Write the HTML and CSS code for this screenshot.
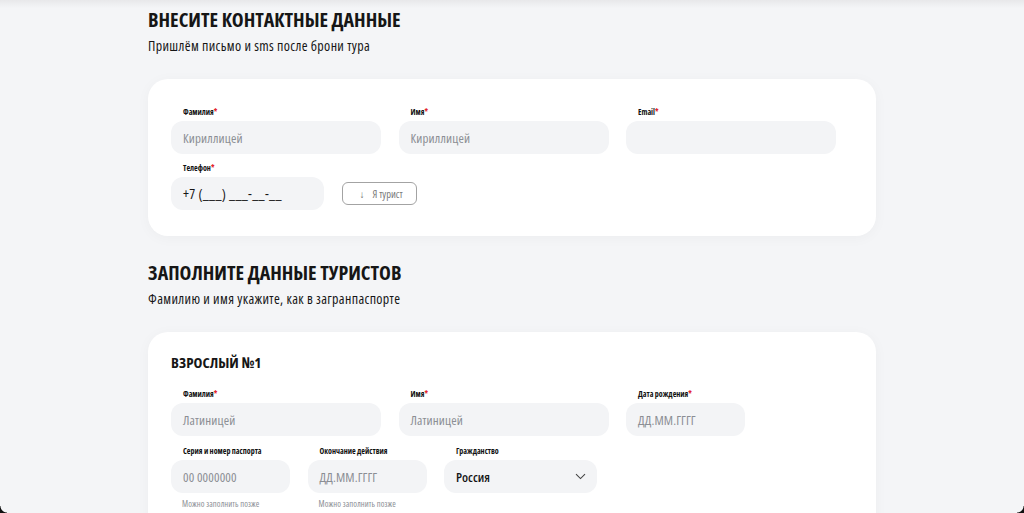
FILE: index.html
```html
<!DOCTYPE html>
<html lang="ru">
<head>
<meta charset="utf-8">
<title>Бронирование</title>
<link rel="stylesheet" href="styles.css">
</head>
<body>
<main class="page">
  <section class="block">
    <h2 class="title">ВНЕСИТЕ КОНТАКТНЫЕ ДАННЫЕ</h2>
    <p class="subtitle">Пришлём письмо и sms после брони тура</p>
    <div class="card">
      <div class="row">
        <div class="field w-l">
          <div class="label">Фамилия<span class="req">*</span></div>
          <div class="input placeholder">Кириллицей</div>
        </div>
        <div class="field w-l">
          <div class="label">Имя<span class="req">*</span></div>
          <div class="input placeholder">Кириллицей</div>
        </div>
        <div class="field w-l">
          <div class="label">Email<span class="req">*</span></div>
          <div class="input"></div>
        </div>
      </div>
      <div class="row row-phone">
        <div class="field w-m">
          <div class="label">Телефон<span class="req">*</span></div>
          <div class="input value phone">+7 (___) ___-__-__</div>
        </div>
        <button class="btn-tourist" type="button"><span class="arrow">↓</span>Я турист</button>
      </div>
    </div>
  </section>

  <section class="block">
    <h2 class="title">ЗАПОЛНИТЕ ДАННЫЕ ТУРИСТОВ</h2>
    <p class="subtitle">Фамилию и имя укажите, как в загранпаспорте</p>
    <div class="card card-tourist">
      <h3 class="card-title">ВЗРОСЛЫЙ №1</h3>
      <div class="row">
        <div class="field w-l">
          <div class="label">Фамилия<span class="req">*</span></div>
          <div class="input placeholder">Латиницей</div>
        </div>
        <div class="field w-l">
          <div class="label">Имя<span class="req">*</span></div>
          <div class="input placeholder">Латиницей</div>
        </div>
        <div class="field w-s">
          <div class="label">Дата рождения<span class="req">*</span></div>
          <div class="input placeholder">ДД.ММ.ГГГГ</div>
        </div>
      </div>
      <div class="row">
        <div class="field w-s">
          <div class="label">Серия и номер паспорта</div>
          <div class="input placeholder">00 0000000</div>
          <div class="hint">Можно заполнить позже</div>
        </div>
        <div class="field w-s">
          <div class="label">Окончание действия</div>
          <div class="input placeholder">ДД.ММ.ГГГГ</div>
          <div class="hint">Можно заполнить позже</div>
        </div>
        <div class="field w-m">
          <div class="label">Гражданство</div>
          <div class="input select value">Россия
            <svg class="chevron" width="11" height="7" viewBox="0 0 11 7"><path d="M1 1.2 L5.5 5.6 L10 1.2" fill="none" stroke="#444" stroke-width="1.1"/></svg>
          </div>
        </div>
      </div>
    </div>
  </section>
</main>
<div class="screen-corners" aria-hidden="true"></div>
</body>
</html>
```
FILE: styles.css
```css
* { box-sizing: border-box; }
html, body { margin: 0; padding: 0; }
body {
  background: #f4f5f7;
  font-family: "Open Sans", "Roboto", sans-serif;
  font-stretch: 75%;
  color: #161616;
  height: 513px;
  overflow: hidden;
  position: relative;
}
body::before {
  content: "";
  position: absolute;
  left: 0; right: 0; top: 0;
  height: 8px;
  background: linear-gradient(#e8e8ea, rgba(244,245,247,0));
}
.screen-corners {
  position: absolute;
  left: 0; right: 0; bottom: 0;
  height: 7px;
  pointer-events: none;
  background:
    radial-gradient(circle at 7px 0, rgba(0,0,0,0) 6px, #111 7px) left bottom / 7px 7px no-repeat,
    radial-gradient(circle at 0 0, rgba(0,0,0,0) 6px, #111 7px) right bottom / 7px 7px no-repeat;
}
.page {
  width: 728px;
  margin-left: 148px;
  padding-top: 8px;
}
.block + .block { margin-top: 25px; }
.title {
  margin: 0;
  font-size: 20px;
  line-height: 24px;
  font-weight: 700;
}
.subtitle {
  margin: 6px 0 0;
  font-size: 14px;
  line-height: 16px;
  font-weight: 500;
  letter-spacing: 0.35px;
}
.card {
  margin-top: 25px;
  background: #fff;
  border-radius: 20px;
  padding: 28px 40px 26px 23px;
  box-shadow: 0 2px 14px rgba(0,0,0,0.035);
  display: flex;
  flex-direction: column;
  gap: 9px;
}
.card-tourist {
  padding-top: 21px;
  gap: 10px;
}
.card-title {
  margin: 0 0 8px;
  font-size: 15px;
  line-height: 18px;
  font-weight: 700;
}
.row {
  display: flex;
  gap: 17.5px;
  align-items: flex-start;
}
.row-phone { align-items: flex-end; }
.field { display: flex; flex-direction: column; }
.w-l { width: 210px; }
.w-m { width: 153px; }
.w-s { width: 119px; }
.label {
  font-size: 8px;
  line-height: 10px;
  font-weight: 700;
  padding-left: 12px;
  margin-bottom: 4px;
  color: #111;
}
.req { color: #e3262f; }
.input {
  height: 33px;
  border-radius: 12px;
  background: #f3f4f6;
  padding: 0 12px;
  display: flex;
  align-items: center;
  font-size: 13px;
}
.placeholder { color: #8b8e94; letter-spacing: 0.15px; }
.value { color: #161616; font-weight: 500; }
.phone { font-size: 14px; letter-spacing: 0.3px; }
.select {
  justify-content: space-between;
  font-weight: 600;
  padding-right: 11px;
}
.chevron { display: block; }
.hint {
  margin-top: 6px;
  padding-left: 11px;
  font-size: 8.5px;
  line-height: 10px;
  color: #8b8e94;
  letter-spacing: 0.1px;
}
.btn-tourist {
  margin-bottom: 5px;
  width: 75px;
  height: 23px;
  border: 1px solid #a3a3a3;
  border-radius: 6px;
  background: #fff;
  font-family: inherit;
  font-stretch: 75%;
  font-size: 10.5px;
  color: #7a7a7a;
  display: flex;
  align-items: center;
  justify-content: center;
  gap: 8px;
  padding: 0 0 0 4px;
}
.arrow { font-size: 10px; color: #666; }
```
